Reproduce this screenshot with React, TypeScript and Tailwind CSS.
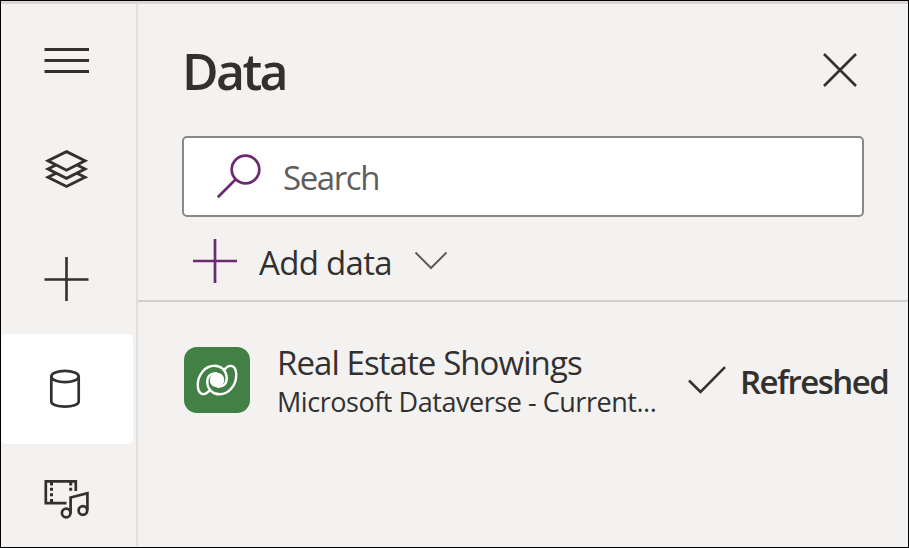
import type { ReactNode } from "react";

const ink = "#323130";

function RailItem({ label, active, children }: { label: string; active?: boolean; children: ReactNode }) {
  return (
    <button
      aria-label={label}
      className={`flex h-[110px] w-[132px] shrink-0 items-center justify-center rounded-[5px] ${active ? "bg-white" : ""}`}
    >
      {children}
    </button>
  );
}

function Rail() {
  return (
    <nav className="flex w-[137px] shrink-0 flex-col overflow-hidden border-r-2 border-[#e1dfdd]">
      <RailItem label="Menu">
        <svg width="132" height="110" fill={ink}>
          <path d="M43.500 44h44.500v3h-44.500zM43.500 55h44.500v3h-44.500zM43.500 66h44.500v3h-44.500z" />
        </svg>
      </RailItem>
      <RailItem label="Tree view">
        <svg width="132" height="110" fill="none" stroke={ink} strokeWidth="2.900">
          <path d="M65.500 37.600L84 46.800L65.500 56.200L47 46.800Z" />
          <path d="M55 51L47 55L65.500 64.400L84 55L76 51" />
          <path d="M55 59.200L47 63.200L65.500 72.500L84 63.200L76 59.200" />
        </svg>
      </RailItem>
      <RailItem label="Insert">
        <svg width="132" height="110" fill="none" stroke={ink} strokeWidth="2.600">
          <path d="M43.500 55.500H87.500M65.500 33V77" />
        </svg>
      </RailItem>
      <RailItem label="Data" active>
        <svg width="132" height="110" fill="none" stroke={ink} strokeWidth="2.700">
          <ellipse cx="64" cy="42.500" rx="13.700" ry="5.600" />
          <path d="M50.300 42.500V67.500C50.300 70.700 56.500 72.700 64 72.700S77.700 70.700 77.700 67.500V42.500" />
        </svg>
      </RailItem>
      <RailItem label="Media">
        <svg width="132" height="110" fill="none" stroke={ink} strokeWidth="2.700">
          <path d="M74.800 47V37.300H44.800V59.100H65.500" />
          <path fill={ink} stroke="none" d="M49 38h3v3.500h-3zM49 43.700h3v3h-3zM49 49.300h3v3h-3zM49 55h3v3.500h-3zM68.200 38h3v3.500h-3zM68.200 43.700h3v3h-3z" />
          <path d="M69.600 69V53.500L86.400 49.200V66" />
          <circle cx="65.200" cy="69" r="4.300" />
          <circle cx="81.900" cy="66.500" r="4.300" />
        </svg>
      </RailItem>
    </nav>
  );
}

function DataverseIcon() {
  const arm =
    "M33 39.800C40 40.500 43 36 42.700 30.500C42.300 23.500 37 18.700 30.500 18.700C21 18.700 13.500 28 13.800 38.500C14 48 20.500 49.500 25.500 43.500";
  return (
    <svg width="66" height="66" viewBox="0 0 66 66" className="shrink-0 rounded-[13px] bg-[#428046]">
      <g fill="none" stroke="#fff" strokeWidth="2.400">
        <path d={arm} />
        <path d={arm} transform="rotate(180 33 33)" />
      </g>
      <circle cx="33" cy="33" r="7.300" fill="#fff" />
    </svg>
  );
}

export default function App() {
  return (
    <div className="flex h-[548px] w-[909px] flex-col overflow-hidden border border-black bg-[#f3f2f1] font-['Open_Sans','Noto_Sans',sans-serif] text-[#323130]">
      <div className="h-[3px] shrink-0 bg-[#d9d5d9]" />
      <div className="flex min-h-0 flex-1">
        <Rail />
        <main className="flex min-w-0 flex-1 flex-col">
          <header className="flex h-[132px] items-center justify-between pr-[51px] pl-[44px]">
            <h1 className="pt-[3px] text-[50px] leading-[135px] font-[650] tracking-[-2.600px]">Data</h1>
            <svg width="34" height="34" fill="none" stroke={ink} strokeWidth="2.600">
              <path d="M1 1L33 33M33 1L1 33" />
            </svg>
          </header>
          <div className="mx-[44px] flex h-[81px] shrink-0 items-center rounded-[5px] border-2 border-[#8a8886] bg-white pl-[33px]">
            <svg width="44" height="44" fill="none" stroke="#6b2a72" strokeWidth="2.700" className="overflow-visible">
              <circle cx="28.500" cy="14.500" r="13.800" />
              <path d="M18.500 24.500L0.800 42.300" />
            </svg>
            <span className="ml-[22px] pt-[2px] text-[33px] leading-[44px] tracking-[-1.400px] text-[#605e5c]">Search</span>
          </div>
          <div className="flex h-[85px] shrink-0 items-center border-b-2 border-[#d2d0ce] pt-[5px] pl-[55px]">
            <svg width="44" height="44" fill="none" stroke="#6b2a72" strokeWidth="2.700">
              <path d="M0 22H44M22 0V44" />
            </svg>
            <span className="ml-[22px] w-[155px] pt-[4px] text-[33px] leading-[44px] tracking-[-0.700px]">Add data</span>
            <svg width="34" height="20" fill="none" stroke="#605e5c" strokeWidth="2">
              <path d="M1.500 1.500L17 17L32.500 1.500" />
            </svg>
          </div>
          <div className="mt-[39px] flex h-[78px] items-center pl-[46px]">
            <DataverseIcon />
            <div className="ml-[27px] w-[411px] pt-[4px]">
              <div className="text-[33px] leading-[40px] tracking-[-0.920px] whitespace-nowrap">Real Estate Showings</div>
              <div className="text-[27px] leading-[38px] tracking-[-0.460px] whitespace-nowrap">Microsoft Dataverse - Current...</div>
            </div>
            <svg width="38" height="29" fill="none" stroke={ink} strokeWidth="2.500">
              <path d="M1 14.500L12.500 26L37 1.200" />
            </svg>
            <span className="ml-[14px] pt-[4px] text-[33px] leading-[44px] font-semibold tracking-[-1.500px]">Refreshed</span>
          </div>
        </main>
      </div>
    </div>
  );
}
